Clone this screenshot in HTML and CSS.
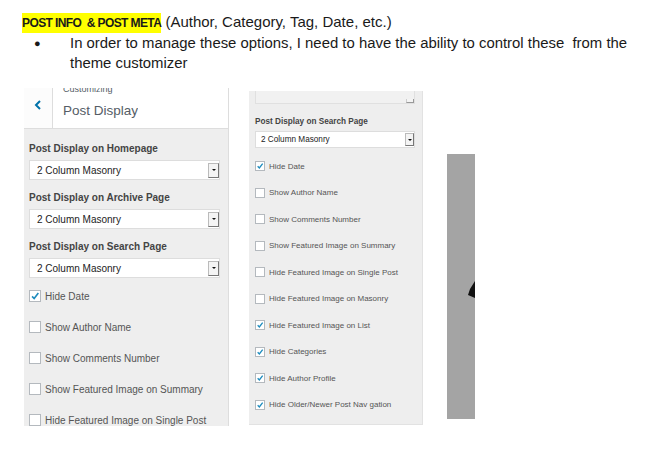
FILE: index.html
```html
<!DOCTYPE html>
<html lang="en">
<head>
    <meta charset="UTF-8">
    <meta name="viewport" content="width=device-width, initial-scale=1.0">
    <title>Post Info &amp; Post Meta</title>
    <link rel="stylesheet" href="styles.css">
</head>
<body>
    <div class="doc">
        <p class="heading"><span class="mark">POST INFO &nbsp;&amp; POST META</span> (Author, Category, Tag, Date, etc.)</p>
        <ul class="bullets">
            <li><span class="dot">&#9679;</span><span>In order to manage these options, I need to have the ability to control these &nbsp;from the<br>theme customizer</span></li>
        </ul>
    </div>

    <div class="shots">
        <div class="panel panel-big">
            <div class="panel-head">
                <div class="back">
                    <svg width="8" height="10" viewBox="0 0 8 10"><path d="M6 1 L2 5 L6 9" fill="none" stroke="#0073aa" stroke-width="2"/></svg>
                </div>
                <div class="head-title">
                    <span class="crumb">Customizing</span>
                    <span class="title">Post Display</span>
                </div>
            </div>
            <div class="panel-body">
                <label class="field-label">Post Display on Homepage</label>
                <div class="select"><span>2 Column Masonry</span><i class="arrow"></i></div>
                <label class="field-label">Post Display on Archive Page</label>
                <div class="select"><span>2 Column Masonry</span><i class="arrow"></i></div>
                <label class="field-label">Post Display on Search Page</label>
                <div class="select"><span>2 Column Masonry</span><i class="arrow"></i></div>

                <div class="checks">
                    <div class="check"><span class="box on"><svg viewBox="0 0 12 12"><path d="M2.5 6.5 L5 9 L10 2.5" fill="none" stroke="#1e8cbe" stroke-width="2"/></svg></span>Hide Date</div>
                    <div class="check"><span class="box"></span>Show Author Name</div>
                    <div class="check"><span class="box"></span>Show Comments Number</div>
                    <div class="check"><span class="box"></span>Show Featured Image on Summary</div>
                    <div class="check"><span class="box"></span>Hide Featured Image on Single Post</div>
                </div>
            </div>
        </div>

        <div class="panel panel-small">
            <div class="select-tail"><i class="arrow"></i></div>
            <div class="panel-body">
                <label class="field-label">Post Display on Search Page</label>
                <div class="select"><span>2 Column Masonry</span><i class="arrow"></i></div>

                <div class="checks">
                    <div class="check"><span class="box on"><svg viewBox="0 0 12 12"><path d="M2.5 6.5 L5 9 L10 2.5" fill="none" stroke="#1e8cbe" stroke-width="2"/></svg></span>Hide Date</div>
                    <div class="check"><span class="box"></span>Show Author Name</div>
                    <div class="check"><span class="box"></span>Show Comments Number</div>
                    <div class="check"><span class="box"></span>Show Featured Image on Summary</div>
                    <div class="check"><span class="box"></span>Hide Featured Image on Single Post</div>
                    <div class="check"><span class="box"></span>Hide Featured Image on Masonry</div>
                    <div class="check"><span class="box on"><svg viewBox="0 0 12 12"><path d="M2.5 6.5 L5 9 L10 2.5" fill="none" stroke="#1e8cbe" stroke-width="2"/></svg></span>Hide Featured Image on List</div>
                    <div class="check"><span class="box on"><svg viewBox="0 0 12 12"><path d="M2.5 6.5 L5 9 L10 2.5" fill="none" stroke="#1e8cbe" stroke-width="2"/></svg></span>Hide Categories</div>
                    <div class="check"><span class="box on"><svg viewBox="0 0 12 12"><path d="M2.5 6.5 L5 9 L10 2.5" fill="none" stroke="#1e8cbe" stroke-width="2"/></svg></span>Hide Author Profile</div>
                    <div class="check"><span class="box on"><svg viewBox="0 0 12 12"><path d="M2.5 6.5 L5 9 L10 2.5" fill="none" stroke="#1e8cbe" stroke-width="2"/></svg></span>Hide Older/Newer Post Nav gation</div>
                </div>
            </div>
        </div>

        <div class="gray-bar">
            <svg class="wedge" width="7" height="18" viewBox="0 0 7 18"><path d="M7 0 L2 8 L0 14 L7 17 Z" fill="#111"/></svg>
        </div>
    </div>
</body>
</html>
```

FILE: styles.css
```css
* { margin: 0; padding: 0; box-sizing: border-box; }
body { font-family: "Liberation Sans", Arial, sans-serif; background-color: #fff; color: #222; width: 670px; height: 452px; overflow: hidden; }

/* document text */
.doc { padding: 12px 0 0 22px; }
.heading { font-size: 15px; line-height: 20px; color: #1a1a1a; }
.mark { background-color: #ffff00; font-weight: bold; font-size: 12px; letter-spacing: -0.6px; padding: 3px 0 3px; }
.bullets { list-style: none; font-size: 14.9px; line-height: 20px; color: #1a1a1a; }
.bullets li { display: flex; }
.dot { width: 48px; padding-left: 12px; font-size: 11px; flex-shrink: 0; }

/* screenshots row */
.shots { display: flex; align-items: flex-start; padding-left: 24px; margin-top: 15px; }
.panel { background-color: #eee; overflow: hidden; }
.panel-big { width: 205px; height: 338px; border-right: 1px solid #ddd; }
.panel-small { width: 174px; height: 334px; margin-left: 20px; margin-top: 3px; border-right: 1px solid #e2e2e2; border-bottom: 1px solid #e2e2e2; }
.gray-bar { width: 28px; height: 265px; margin-left: 24px; margin-top: 66px; background-color: #a4a4a4; display: flex; flex-direction: column; align-items: flex-end; }
.wedge { margin-top: 127px; }

/* customizer header */
.panel-head { display: flex; height: 41px; background-color: #fff; border-bottom: 1px solid #ddd; }
.back { width: 29px; border-right: 1px solid #ddd; background-color: #fcfcfc; display: flex; justify-content: center; padding-top: 12px; }
.head-title { padding-left: 10px; display: flex; flex-direction: column; overflow: hidden; }
.crumb { font-size: 9px; line-height: 12px; margin-top: -5px; color: #555d66; }
.title { font-size: 13.5px; line-height: 18px; margin-top: 7px; color: #555d66; }

/* controls */
.panel-big .panel-body { padding: 13px 8px 0 5px; }
.panel-small .panel-body { padding: 0 7px 0 6px; }

.field-label { display: block; font-weight: bold; color: #444; }
.panel-big .field-label { font-size: 10px; line-height: 14px; margin-bottom: 4px; }
.panel-small .field-label { font-size: 8.2px; line-height: 12px; margin: 12px 0 3px; }

.select { display: flex; align-items: center; justify-content: space-between; background-color: #fff; border: 1px solid #ddd; color: #222; }
.panel-big .select { height: 20px; padding-left: 7px; margin-bottom: 11px; font-size: 10px; }
.panel-small .select { height: 17px; padding-left: 5px; font-size: 8.2px; }

.arrow { display: flex; align-items: center; justify-content: center; background-color: #f4f4f4; border: 1px solid #bbb; border-right-color: #777; border-bottom-color: #777; }
.arrow::after { content: ""; border-left: 2px solid transparent; border-right: 2px solid transparent; border-top: 2px solid #111; }
.panel-big .arrow { width: 11px; height: 15px; }
.panel-small .arrow { width: 9px; height: 13px; }

.select-tail { height: 13px; margin: 0 7px 0 6px; background-color: #f1f1f1; border: 1px solid #e0e0e0; border-top: none; display: flex; justify-content: flex-end; align-items: flex-end; }
.select-tail .arrow { width: 8px; height: 4px; border-top: none; border-left-color: #ccc; border-right-color: #999; border-bottom-color: #999; }
.select-tail .arrow::after { display: none; }

.checks { display: flex; flex-direction: column; }
.check { display: flex; align-items: center; color: #555; }
.box { background-color: #fff; border: 1px solid #b4b9be; display: flex; flex-shrink: 0; }
.box svg { width: 100%; height: 100%; }

.panel-big .checks { margin-top: 5px; gap: 17px; }
.panel-big .check { height: 14px; font-size: 10px; }
.panel-big .box { width: 12px; height: 12px; margin-right: 4px; }

.panel-small .checks { margin-top: 12px; gap: 14.5px; }
.panel-small .check { height: 12px; font-size: 8px; }
.panel-small .box { width: 10px; height: 10px; margin-right: 4px; }
```
